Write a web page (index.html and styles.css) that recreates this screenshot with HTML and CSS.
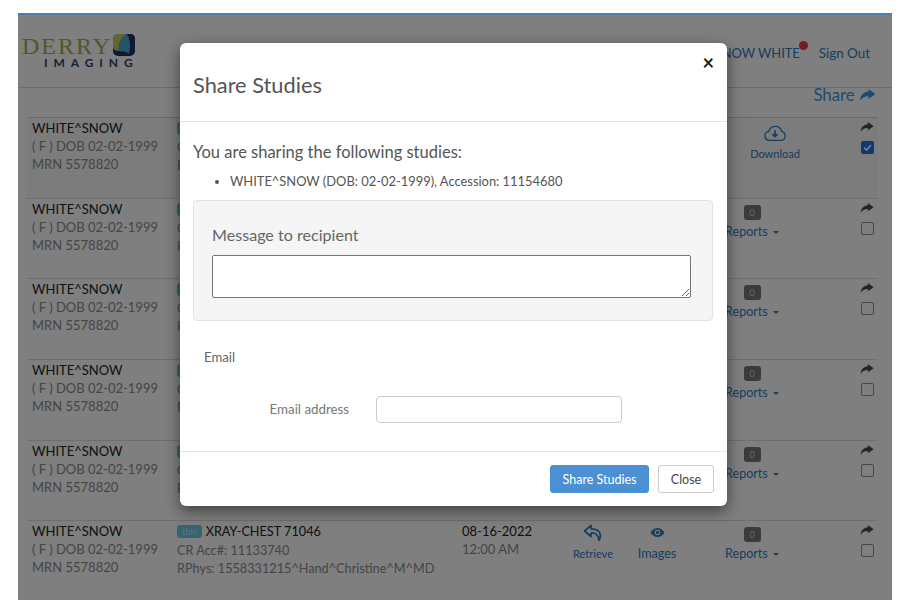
FILE: index.html
```html
<!DOCTYPE html>
<html lang="en">
<head>
<meta charset="utf-8">
<title>Share Studies</title>
<link rel="stylesheet" href="styles.css">
</head>
<body>
<svg class="defs" aria-hidden="true">
  <symbol id="share" viewBox="0 0 16 12"><path d="M9 0 L16 5 L9 10 V7.2 C5.6 7 3 8.2 0.5 11.6 C0.8 6.4 4 3 9 2.6 Z"/></symbol>
  <symbol id="retrieve" viewBox="0 0 20 18"><path d="M8 1.5 L1.5 7 L8 12.5 V9 C12 8.6 15.5 10.5 16 16.5 C19.5 10 16 4.6 8 4.8 Z" fill="none" stroke="currentColor" stroke-width="1.7" stroke-linejoin="round"/></symbol>
  <symbol id="eye" viewBox="0 0 16 12"><path fill-rule="evenodd" d="M8 1 C11.6 1 14.4 3.6 15.6 6 C14.4 8.4 11.6 11 8 11 C4.4 11 1.6 8.4 .4 6 C1.6 3.6 4.4 1 8 1 Z M8 3 A3 3 0 1 0 8 9 A3 3 0 1 0 8 3 Z"/><circle cx="8" cy="6" r="1.8"/></symbol>
</svg>
<div class="app">
  <header class="topbar">
    <div class="logo">
      <div class="logo-top"><span class="logo-derry">DERRY</span>
        <svg class="logo-mark" viewBox="0 0 24 24"><rect x="1" y="1" width="22" height="22" rx="5" fill="#1c3563"/><path d="M1 6 Q1 1 6 1 H15 C9 5 6 11 7 18 C4 18 2 17 1 15 Z" fill="#c4cf62"/><path d="M15 1 H18 Q23 1 23 6 V15 C22 8 19 4 15 1 Z" fill="#1c3563"/><path d="M15 1 C9 5 6 11 7 18 C11 19 15 18 17 21 C19 13 18 6 15 1 Z" fill="#4aa7cf"/></svg>
      </div>
      <div class="logo-sub">IMAGING</div>
    </div>
    <nav class="usernav">
      <span class="user">SNOW WHITE<i class="dot"></i></span>
      <a class="signout">Sign Out</a>
    </nav>
  </header>
  <div class="sharebar"><a class="sharelink">Share <svg class="ic-share-lg"><use href="#share"/></svg></a></div>
  <main class="rows">
    <section class="row">
      <div class="pt"><b>WHITE^SNOW</b><span>( F ) DOB 02-02-1999</span><span>MRN 5578820</span></div>
      <div class="study"><b><em class="tag">thin</em> XRAY-CHEST 71046</b><span>CR Acc#: 11154680</span><span>RPhys: 1558331215^Hand^Christine^M^MD</span></div>
      <div class="date"><b>08-16-2022</b><span>12:00 AM</span></div>
      <div class="acts">
        <a class="act dl"><svg class="ic-cloud" viewBox="0 0 24 18" fill="none" stroke="currentColor" stroke-width="1.4"><path d="M6.5 16.5 C3 16.5 1 14.2 1 11.5 C1 9 3 7.2 5 7 C6 3.6 9 1.2 12.5 1.2 C16 1.2 18.6 3.6 19.2 6.8 C21.6 7.4 23 9.2 23 11.6 C23 14.4 21 16.5 18 16.5 Z"/><path d="M12 5.5 V12 M9.2 9.6 L12 12.4 L14.8 9.6" stroke-width="1.8"/></svg><span>Download</span></a>
      </div>
      <div class="pick"><svg class="ic-share"><use href="#share"/></svg><i class="check on"><svg viewBox="0 0 12 12"><path d="M2.4 6.2 L5 8.8 L9.8 3.2" fill="none" stroke="#fff" stroke-width="1.8"/></svg></i></div>
    </section>
    <section class="row">
      <div class="pt"><b>WHITE^SNOW</b><span>( F ) DOB 02-02-1999</span><span>MRN 5578820</span></div>
      <div class="study"><b><em class="tag">thin</em> XRAY-CHEST 71046</b><span>CR Acc#: 11133740</span><span>RPhys: 1558331215^Hand^Christine^M^MD</span></div>
      <div class="date"><b>08-16-2022</b><span>12:00 AM</span></div>
      <div class="acts">
        <a class="act rt"><svg class="ic-ret"><use href="#retrieve"/></svg><span>Retrieve</span></a>
        <a class="act im"><svg class="ic-eye"><use href="#eye"/></svg><span>Images</span></a>
        <a class="act rp"><i class="badge">0</i><span>Reports <u class="caret"></u></span></a>
      </div>
      <div class="pick"><svg class="ic-share"><use href="#share"/></svg><i class="check"></i></div>
    </section>
    <section class="row">
      <div class="pt"><b>WHITE^SNOW</b><span>( F ) DOB 02-02-1999</span><span>MRN 5578820</span></div>
      <div class="study"><b><em class="tag">thin</em> XRAY-CHEST 71046</b><span>CR Acc#: 11133740</span><span>RPhys: 1558331215^Hand^Christine^M^MD</span></div>
      <div class="date"><b>08-16-2022</b><span>12:00 AM</span></div>
      <div class="acts">
        <a class="act rt"><svg class="ic-ret"><use href="#retrieve"/></svg><span>Retrieve</span></a>
        <a class="act im"><svg class="ic-eye"><use href="#eye"/></svg><span>Images</span></a>
        <a class="act rp"><i class="badge">0</i><span>Reports <u class="caret"></u></span></a>
      </div>
      <div class="pick"><svg class="ic-share"><use href="#share"/></svg><i class="check"></i></div>
    </section>
    <section class="row">
      <div class="pt"><b>WHITE^SNOW</b><span>( F ) DOB 02-02-1999</span><span>MRN 5578820</span></div>
      <div class="study"><b><em class="tag">thin</em> XRAY-CHEST 71046</b><span>CR Acc#: 11133740</span><span>RPhys: 1558331215^Hand^Christine^M^MD</span></div>
      <div class="date"><b>08-16-2022</b><span>12:00 AM</span></div>
      <div class="acts">
        <a class="act rt"><svg class="ic-ret"><use href="#retrieve"/></svg><span>Retrieve</span></a>
        <a class="act im"><svg class="ic-eye"><use href="#eye"/></svg><span>Images</span></a>
        <a class="act rp"><i class="badge">0</i><span>Reports <u class="caret"></u></span></a>
      </div>
      <div class="pick"><svg class="ic-share"><use href="#share"/></svg><i class="check"></i></div>
    </section>
    <section class="row">
      <div class="pt"><b>WHITE^SNOW</b><span>( F ) DOB 02-02-1999</span><span>MRN 5578820</span></div>
      <div class="study"><b><em class="tag">thin</em> XRAY-CHEST 71046</b><span>CR Acc#: 11133740</span><span>RPhys: 1558331215^Hand^Christine^M^MD</span></div>
      <div class="date"><b>08-16-2022</b><span>12:00 AM</span></div>
      <div class="acts">
        <a class="act rt"><svg class="ic-ret"><use href="#retrieve"/></svg><span>Retrieve</span></a>
        <a class="act im"><svg class="ic-eye"><use href="#eye"/></svg><span>Images</span></a>
        <a class="act rp"><i class="badge">0</i><span>Reports <u class="caret"></u></span></a>
      </div>
      <div class="pick"><svg class="ic-share"><use href="#share"/></svg><i class="check"></i></div>
    </section>
    <section class="row">
      <div class="pt"><b>WHITE^SNOW</b><span>( F ) DOB 02-02-1999</span><span>MRN 5578820</span></div>
      <div class="study"><b><em class="tag">thin</em> XRAY-CHEST 71046</b><span>CR Acc#: 11133740</span><span>RPhys: 1558331215^Hand^Christine^M^MD</span></div>
      <div class="date"><b>08-16-2022</b><span>12:00 AM</span></div>
      <div class="acts">
        <a class="act rt"><svg class="ic-ret"><use href="#retrieve"/></svg><span>Retrieve</span></a>
        <a class="act im"><svg class="ic-eye"><use href="#eye"/></svg><span>Images</span></a>
        <a class="act rp"><i class="badge">0</i><span>Reports <u class="caret"></u></span></a>
      </div>
      <div class="pick"><svg class="ic-share"><use href="#share"/></svg><i class="check"></i></div>
    </section>
  </main>
  <div class="backdrop"></div>
  <div class="modal">
    <div class="m-head">
      <h2>Share Studies</h2>
      <span class="x">×</span>
    </div>
    <div class="m-body">
      <p class="lead">You are sharing the following studies:</p>
      <ul><li>WHITE^SNOW (DOB: 02-02-1999), Accession: 11154680</li></ul>
      <div class="well">
        <label>Message to recipient</label>
        <textarea></textarea>
      </div>
      <div class="email-title">Email</div>
      <div class="email-row"><label>Email address</label><input type="text"></div>
    </div>
    <div class="m-foot">
      <button class="btn primary">Share Studies</button>
      <button class="btn">Close</button>
    </div>
  </div>
</div>
</body>
</html>
```
FILE: styles.css
```css
* { box-sizing: border-box; }
html, body { margin: 0; height: 100%; background: #fff; }
body { font-family: Lato, "Liberation Sans", sans-serif; font-size: 13px; color: #333; overflow: hidden; }
.defs { display: none; }
.app { position: relative; margin: 13px 18px 0; height: 587px; background: #fff; border-top: 2px solid #4a7cb8; overflow: hidden; }
.backdrop { position: absolute; inset: 0; background: rgba(0,0,0,.5); }

.topbar { height: 73px; display: flex; justify-content: space-between; border-bottom: 1px solid #d8d8d8; padding: 17px 22px 0 4px; }
.logo-top { display: flex; align-items: flex-start; height: 26px; }
.logo-derry { font-family: "Liberation Serif", serif; font-size: 24px; line-height: 28px; letter-spacing: 2px; color: #a0ae58; }
.logo-mark { width: 24px; height: 24px; margin-left: 0; margin-top: 1px; }
.logo-sub { font-size: 12px; font-weight: 700; letter-spacing: 5.9px; line-height: 12px; color: #34406a; padding-left: 22px; margin-top: -1px; }
.usernav { display: flex; gap: 19px; padding-top: 12px; font-size: 13px; line-height: 18px; color: #2a7cc0; }
.user { position: relative; font-size: 12.9px; }
.dot { position: absolute; right: -8px; top: -3px; width: 9px; height: 9px; border-radius: 50%; background: #f03a3a; }
.signout { font-size: 13.4px; }

.sharebar { height: 29px; padding: 0 16px 0 0; text-align: right; font-size: 16.8px; line-height: 13px; color: #3a96e0; }
.ic-share-lg { width: 17px; height: 12px; fill: currentColor; vertical-align: 0; }

.rows { margin: 0 14px 0 9px; border-top: 1px solid #d0d0d0; }
.row { height: 80.7px; border-bottom: 1px solid #ddd; display: grid; grid-template-columns: 145px 285px 100px 1fr 22px; padding: 1px 0 0 5px; font-size: 13px; line-height: 18px; color: #8a8a8a; }
.row b { font-weight: 400; color: #222; display: block; }
.row span { display: block; }
.row:first-child { background: #f9f9f9; }
.study { font-size: 12.7px; }
.tag { font-style: normal; font-size: 9px; background: #6cc8e0; color: #b6e6f2; border-radius: 3px; padding: 1px 5px; vertical-align: 1px; }
.date b { color: #222; }
.acts { position: relative; display: flex; }
.act { position: relative; display: flex; flex-direction: column; align-items: center; color: #2a7cc0; }
.rt { position: absolute; left: 1px; width: 60px; top: 2px; font-size: 11px; }
.im { position: absolute; left: 65px; width: 60px; top: 2px; font-size: 12.5px; }
.rp { position: absolute; left: 155px; width: 70px; top: 2px; font-size: 12.5px; }
.dl { position: absolute; left: 178px; width: 70px; top: 6px; font-size: 11px; }
.rt span, .im span, .rp span { margin-top: 3px; }
.ic-ret { width: 20px; height: 18px; margin-top: 0; }
.ic-eye { width: 15px; height: 11px; fill: currentColor; margin: 3px 0 4px; }
.ic-cloud { width: 22px; height: 17px; margin-bottom: 3px; }
.badge { font-style: normal; display: block; width: 17px; height: 15px; margin-top: 3px; border-radius: 3px; background: #777; color: #ccc; font-size: 9px; line-height: 15px; text-align: center; }
.caret { display: inline-block; width: 0; height: 0; margin-left: 2px; vertical-align: 2px; border: 3px solid transparent; border-top-color: currentColor; border-bottom: 0; border-left-width: 3.5px; border-right-width: 3.5px; text-decoration: none; }
.pick { display: flex; flex-direction: column; align-items: center; gap: 9px; padding-top: 3px; }
.ic-share { width: 14px; height: 10px; fill: #4a4a4a; }
.check { display: block; width: 13px; height: 13px; border: 1px solid #8c8c8c; border-radius: 2px; background: #fff; font-style: normal; }
.check.on { background: #1a73e8; border-color: #1a73e8; }
.check svg { display: block; width: 11px; height: 11px; }

.modal { position: absolute; left: 162px; top: 28px; width: 547px; height: 463px; background: #fff; border-radius: 6px; box-shadow: 0 5px 15px rgba(0,0,0,.5); display: flex; flex-direction: column; }
.m-head { position: relative; height: 79px; border-bottom: 1px solid #e5e5e5; padding: 28px 13px 0; }
.m-head h2 { margin: 0; font-weight: 400; font-size: 21.8px; line-height: 28px; color: #555; }
.x { position: absolute; right: 13px; top: 7px; font-size: 20px; line-height: 24px; font-weight: 700; color: #222; }
.m-body { flex: 1; padding: 20px 14px 0 13px; color: #555; }
.lead { margin: 0; font-size: 16.5px; line-height: 20px; }
ul { margin: 10px 0 0; padding: 0 0 0 37px; font-size: 12.9px; line-height: 18px; }
li { list-style: disc; }
.well { margin-top: 10px; height: 121px; background: #f5f5f5; border: 1px solid #e3e3e3; border-radius: 4px; padding: 23px 18px 0; }
.well label { display: block; font-size: 16.1px; line-height: 22px; color: #666; }
.well textarea { display: block; width: 479px; height: 43px; margin-top: 9px; border: 1px solid #767676; border-radius: 2px; background: #fff; }
.email-title { margin: 27px 0 0 11px; font-size: 13.2px; line-height: 18px; color: #666; }
.email-row { display: flex; align-items: center; margin-top: 30px; }
.email-row label { width: 156px; padding-bottom: 2px; text-align: right; font-size: 13.3px; color: #777; }
.email-row input { width: 246px; height: 27px; margin-left: 27px; border: 1px solid #ccc; border-radius: 4px; background: #fff; }
.m-foot { height: 55px; border-top: 1px solid #e5e5e5; display: flex; justify-content: flex-end; align-items: flex-start; gap: 9px; padding: 13px 13px 0 0; }
.btn { height: 28px; padding: 0; font: inherit; font-size: 12.5px; color: #444; background: #fff; border: 1px solid #ccc; border-radius: 3px; }
.btn.primary { width: 99px; background: #4a90d2; border-color: #4a90d2; color: #fff; }
.btn:not(.primary) { width: 56px; }
```
